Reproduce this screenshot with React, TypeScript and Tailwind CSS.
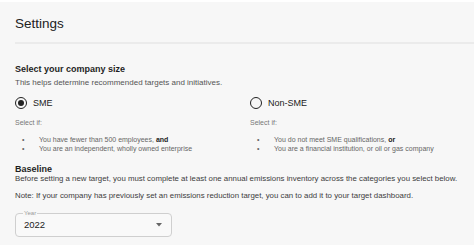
export default function App() {
  const font = { fontFamily: '"Liberation Sans", Arial, sans-serif' };
  return (
    <div className="w-[474px] h-[249px] bg-white pt-[2px] overflow-hidden" style={font}>
      <div className="bg-[#f7f7f7] h-[243px] flex flex-col">
        <div className="pl-[15px] pt-[14px] text-[13.5px] leading-[16px] text-[#222]">Settings</div>
        <div className="mt-[10px] ml-[15px] h-[2px] bg-[#ebebeb]" />

        <div className="pl-[15px] mt-[19px] text-[9px] leading-[12px] font-bold text-[#1f1f1f]">
          Select your company size
        </div>
        <div className="pl-[15px] mt-[3px] text-[8px] leading-[10px] text-[#555]">
          This helps determine recommended targets and initiatives.
        </div>

        <div className="pl-[15px] mt-[9px] grid grid-cols-[235px_1fr]">
          <Option
            label="SME"
            checked
            items={[
              <>You have fewer than 500 employees, <b className="text-[#222]">and</b></>,
              <>You are an independent, wholly owned enterprise</>,
            ]}
          />
          <Option
            label="Non-SME"
            items={[
              <>You do not meet SME qualifications, <b className="text-[#222]">or</b></>,
              <>You are a financial institution, or oil or gas company</>,
            ]}
          />
        </div>

        <div className="pl-[15px] mt-[11px] text-[9px] leading-[10px] font-bold text-[#1f1f1f]">Baseline</div>
        <div className="pl-[15px] text-[7.85px] leading-[10px] text-[#3d3d3d]">
          Before setting a new target, you must complete at least one annual emissions inventory across the categories you select below.
        </div>
        <div className="pl-[15px] mt-[7px] text-[7.85px] leading-[10px] text-[#3d3d3d]">
          Note: If your company has previously set an emissions reduction target, you can to add it to your target dashboard.
        </div>

        <div className="ml-[15px] mt-[12px] relative w-[157px] h-[24px] border border-[#cfcfcf] rounded-[4px] bg-[#f9f9f9] flex items-center justify-between pl-[8px] pr-[9px]">
          <span className="absolute left-[7px] top-[-5px] px-[1px] bg-[#f7f7f7] text-[6px] leading-[8px] text-[#9a9a9a]">Year</span>
          <span className="text-[9.5px] leading-[12px] text-[#222]">2022</span>
          <svg width="6" height="4" viewBox="0 0 6 4">
            <path d="M0 0 L6 0 L3 3.5 Z" fill="#666" />
          </svg>
        </div>
      </div>
    </div>
  );
}

function Option({ label, checked, items }: { label: string; checked?: boolean; items: React.ReactNode[] }) {
  return (
    <div className="flex flex-col">
      <div className="flex items-center h-[12px]">
        <span className="w-[12px] h-[12px] rounded-full border-[1.5px] border-[#222] flex items-center justify-center">
          {checked && <span className="w-[6px] h-[6px] rounded-full bg-[#222]" />}
        </span>
        <span className="ml-[6px] text-[9px] leading-[12px] text-[#222]">{label}</span>
      </div>
      <div className="mt-[9px] text-[7px] leading-[9px] text-[#777]">Select if:</div>
      <ul className="mt-[8px]">
        {items.map((it, i) => (
          <li key={i} className="flex text-[7px] leading-[9px] text-[#666]">
            <span className="w-[24px] pl-[7px]">•</span>
            <span>{it}</span>
          </li>
        ))}
      </ul>
    </div>
  );
}
